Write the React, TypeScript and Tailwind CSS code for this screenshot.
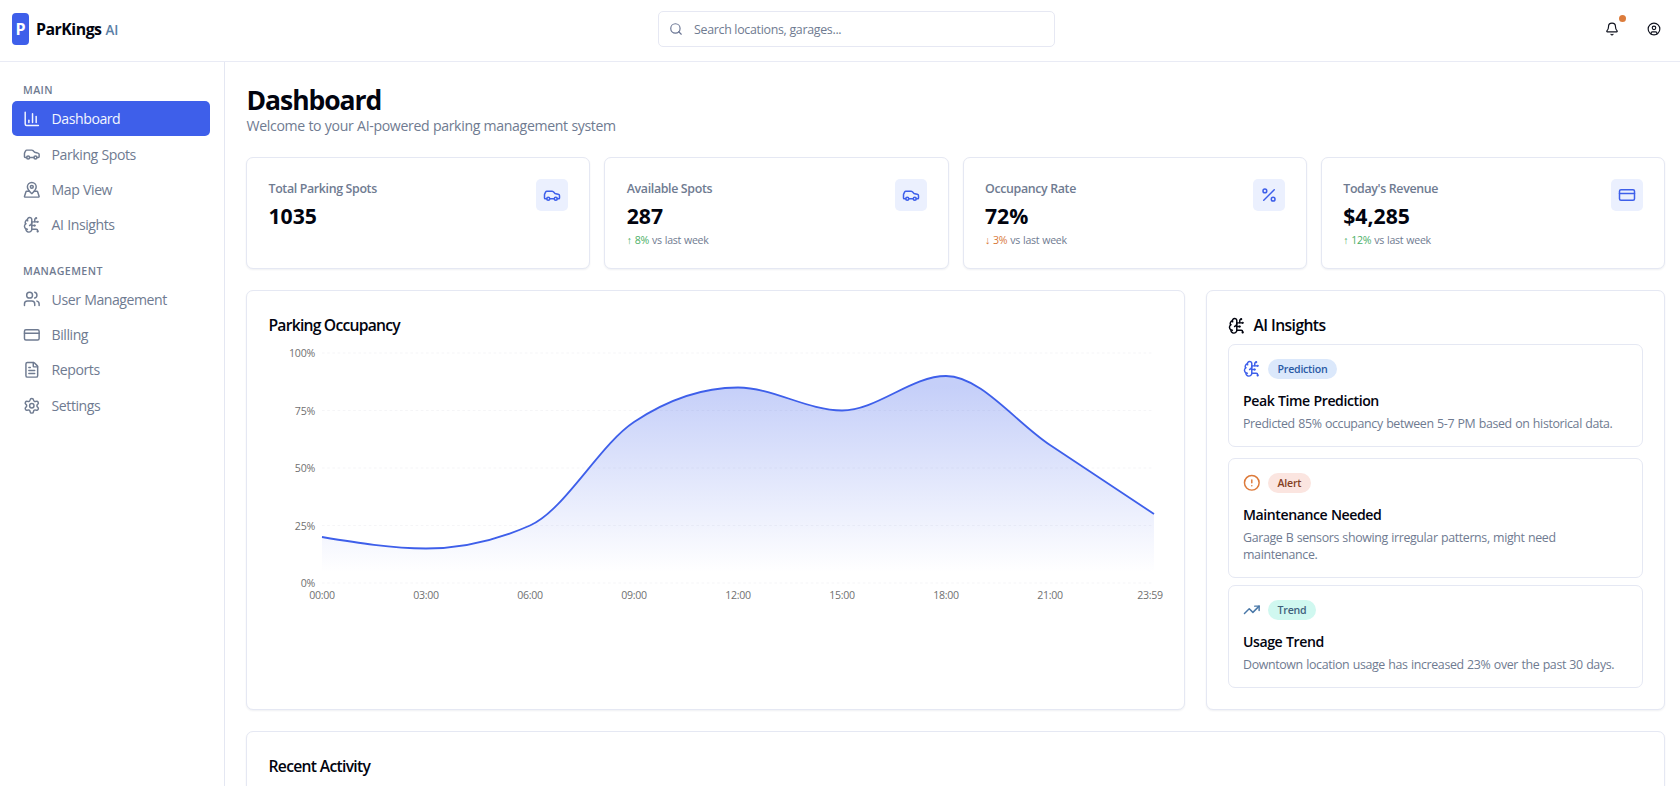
import type { ReactNode } from 'react'
import {
  Bell,
  BrainCircuit,
  Car,
  ChartColumn,
  CircleAlert,
  CircleUser,
  CreditCard,
  FileText,
  MapPinned,
  Percent,
  Search,
  Settings,
  TrendingUp,
  Users,
  type LucideIcon,
} from 'lucide-react'
import clsx from 'clsx'

type NavItem = { label: string; icon: LucideIcon; active?: boolean }

const mainNav: NavItem[] = [
  { label: 'Dashboard', icon: ChartColumn, active: true },
  { label: 'Parking Spots', icon: Car },
  { label: 'Map View', icon: MapPinned },
  { label: 'AI Insights', icon: BrainCircuit },
]

const managementNav: NavItem[] = [
  { label: 'User Management', icon: Users },
  { label: 'Billing', icon: CreditCard },
  { label: 'Reports', icon: FileText },
  { label: 'Settings', icon: Settings },
]

type Stat = { title: string; value: string; icon: LucideIcon; trend?: { up: boolean; value: string } }

const stats: Stat[] = [
  { title: 'Total Parking Spots', value: '1035', icon: Car },
  { title: 'Available Spots', value: '287', icon: Car, trend: { up: true, value: '8%' } },
  { title: 'Occupancy Rate', value: '72%', icon: Percent, trend: { up: false, value: '3%' } },
  { title: "Today's Revenue", value: '$4,285', icon: CreditCard, trend: { up: true, value: '12%' } },
]

const insights = [
  {
    type: 'Prediction',
    icon: BrainCircuit,
    iconClass: 'text-[#3e5fea]',
    badgeClass: 'bg-[#dbe8fb] text-[#2a5aa5]',
    title: 'Peak Time Prediction',
    description: 'Predicted 85% occupancy between 5-7 PM based on historical data.',
    cardClass: 'h-[103px]',
  },
  {
    type: 'Alert',
    icon: CircleAlert,
    iconClass: 'text-[#dd7a3a]',
    badgeClass: 'bg-[#fbe5e0] text-[#84401f]',
    title: 'Maintenance Needed',
    description: 'Garage B sensors showing irregular patterns, might need maintenance.',
    cardClass: 'mt-[11px] h-[120px]',
  },
  {
    type: 'Trend',
    icon: TrendingUp,
    iconClass: 'text-[#4a78a8]',
    badgeClass: 'bg-[#d0f8f0] text-[#40607c]',
    title: 'Usage Trend',
    description: 'Downtown location usage has increased 23% over the past 30 days.',
    cardClass: 'mt-[7px] h-[103px]',
  },
]

const occupancy = [
  { time: '00:00', value: 20 },
  { time: '03:00', value: 15 },
  { time: '06:00', value: 25 },
  { time: '09:00', value: 70 },
  { time: '12:00', value: 85 },
  { time: '15:00', value: 75 },
  { time: '18:00', value: 90 },
  { time: '21:00', value: 60 },
  { time: '23:59', value: 30 },
]

function Card({ className, children }: { className?: string; children?: ReactNode }) {
  return (
    <div className={clsx('rounded-[7px] border border-[#e5e8f3] bg-white shadow-[0_1px_2px_rgba(30,41,90,0.07)]', className)}>
      {children}
    </div>
  )
}

function Header() {
  return (
    <header className="flex h-[62px] shrink-0 items-center border-b border-[#e9ebf5] px-3 pb-[3px]">
      <div className="flex w-[646px] items-center">
        <div className="flex h-8 w-[17px] items-center justify-center rounded-[4px] bg-[#3e5fea] text-[16px] font-bold text-white">
          P
        </div>
        <span className="ml-[7px] pt-[2px] text-[15.9px] font-bold tracking-[-0.5px] text-[#02040f]">ParKings</span>
        <span className="ml-1 pt-[2px] text-[13.4px] font-semibold text-[#5a7fa6]">AI</span>
      </div>
      <div className="flex h-[36px] w-[397px] items-center rounded-[5px] border border-[#e6e8f3] pl-[10px]">
        <Search className="size-[14px] text-[#6b7694]" />
        <span className="ml-[11px] pt-[2px] text-[12.4px] tracking-[-0.3px] text-[#6f7b91]">Search locations, garages...</span>
      </div>
      <div className="ml-auto flex items-center gap-[28px] pr-[7px] text-[#10131f]">
        <div className="relative">
          <Bell className="size-[14px]" />
          <span className="absolute -top-[7px] left-[14px] size-[7px] rounded-full bg-[#dc7c3c]" />
        </div>
        <CircleUser className="size-[14px]" />
      </div>
    </header>
  )
}

function NavSection({ title, items }: { title: string; items: NavItem[] }) {
  return (
    <div>
      <h3 className="mb-[3px] pl-[11px] text-[10.6px] leading-[15px] font-semibold tracking-[0.42px] text-[#6f7b91]">{title}</h3>
      {items.map(({ label, icon: Icon, active }) => (
        <a
          key={label}
          className={clsx(
            'flex h-[35.4px] items-center rounded-[5px] pl-[11px] text-[14.1px] tracking-[-0.45px] [word-spacing:0.5px]',
            active ? 'bg-[#3e5fea] text-[#f3f6ff]' : 'text-[#6f7b91]',
          )}
        >
          <Icon className="mr-[11px] size-[17.6px]" />
          {label}
        </a>
      ))}
    </div>
  )
}

function Sidebar() {
  return (
    <aside className="flex w-[225px] shrink-0 flex-col gap-[21px] border-r border-[#e4e7f2] pt-[21px] pr-[14px] pl-3">
      <NavSection title="MAIN" items={mainNav} />
      <NavSection title="MANAGEMENT" items={managementNav} />
    </aside>
  )
}

function StatCard({ title, value, icon: Icon, trend }: Stat) {
  return (
    <Card className="flex h-[112px] items-start justify-between py-[21px] pr-[21px] pl-[21.5px]">
      <div>
        <p className="mt-px text-[12.4px] leading-[18px] font-semibold tracking-[-0.35px] text-[#6f7b91]">{title}</p>
        <p className="mt-[4px] text-[21.2px] leading-[28px] font-bold text-[#02040f]">{value}</p>
        {trend && (
          <p className="mt-[3px] text-[10.6px] leading-[14px] tracking-[-0.28px] text-[#6f7b91] [word-spacing:0.5px]">
            <span className={trend.up ? 'text-[#4cb068]' : 'text-[#d9793a]'}>
              {trend.up ? '↑' : '↓'} {trend.value}
            </span>{' '}
            vs last week
          </p>
        )}
      </div>
      <div className="rounded-[5px] bg-[#ebf0fe] p-[7px] text-[#3e5fea]">
        <Icon className="size-[18px]" />
      </div>
    </Card>
  )
}

// Plot area inside the svg
const plot = { left: 53, right: 885, top: 9, bottom: 239 }

// Monotone cubic interpolation through the points
function monotonePath(points: { x: number; y: number }[]) {
  const n = points.length
  const slopes = points.slice(1).map((p, i) => (p.y - points[i].y) / (p.x - points[i].x))
  const tangents: number[] = new Array(n).fill(0)
  for (let i = 1; i < n - 1; i++) {
    const a = slopes[i - 1]
    const b = slopes[i]
    tangents[i] = a * b <= 0 ? 0 : Math.sign(a) * Math.min(Math.abs(a), Math.abs(b), Math.abs((a + b) / 4)) * 2
  }
  tangents[0] = (3 * slopes[0] - tangents[1]) / 2
  tangents[n - 1] = (3 * slopes[n - 2] - tangents[n - 2]) / 2

  let d = `M${points[0].x},${points[0].y}`
  for (let i = 0; i < n - 1; i++) {
    const p = points[i]
    const q = points[i + 1]
    const dx = (q.x - p.x) / 3
    d += `C${p.x + dx},${p.y + dx * tangents[i]},${q.x - dx},${q.y - dx * tangents[i + 1]},${q.x},${q.y}`
  }
  return d
}

function OccupancyChart() {
  const yFor = (value: number) => plot.bottom - ((plot.bottom - plot.top) * value) / 100
  const step = (plot.right - plot.left) / (occupancy.length - 1)
  const points = occupancy.map((d, i) => ({ x: plot.left + i * step, y: yFor(d.value) }))
  const line = monotonePath(points)

  return (
    <svg width="896" height="264" className="block overflow-visible" fontSize="10.6">
      <defs>
        <linearGradient id="occupancy" x1="0" y1="0" x2="0" y2="1">
          <stop offset="5%" stopColor="#3e5fea" stopOpacity="0.3" />
          <stop offset="95%" stopColor="#3e5fea" stopOpacity="0" />
        </linearGradient>
      </defs>
      {[0, 25, 50, 75, 100].map((tick) => (
        <g key={tick}>
          <line x1={plot.left} x2={plot.right} y1={yFor(tick)} y2={yFor(tick)} stroke="#f5f5f7" strokeDasharray="2.6 2.6" />
          <text x={plot.left - 7} y={yFor(tick) + 4} textAnchor="end" fill="#707070" letterSpacing="-0.25">
            {tick}%
          </text>
        </g>
      ))}
      <path d={`${line}L${plot.right},${plot.bottom}L${plot.left},${plot.bottom}Z`} fill="url(#occupancy)" />
      <path d={line} fill="none" stroke="#3e5fea" strokeWidth="1.8" />
      {occupancy.map((d, i) => (
        <text
          key={d.time}
          x={i === occupancy.length - 1 ? points[i].x - 4 : points[i].x}
          y={plot.bottom + 15.5}
          textAnchor="middle"
          fill="#707070"
          letterSpacing="-0.3"
        >
          {d.time}
        </text>
      ))}
    </svg>
  )
}

function InsightsPanel() {
  return (
    <Card className="w-[459px] px-[21px] pt-[21px]">
      <h2 className="flex h-[32px] items-center pb-[4px] text-[15.7px] font-semibold tracking-[-0.6px] text-[#02040f]">
        <BrainCircuit className="mr-2 size-[17.6px]" />
        AI Insights
      </h2>
      {insights.map(({ type, icon: Icon, iconClass, badgeClass, title, description, cardClass }) => (
        <div key={type} className={clsx('rounded-[7px] border border-[#e5e8f3] px-[14px] pt-[14px]', cardClass)}>
          <div className="flex items-center gap-[7px]">
            <Icon className={clsx('size-[17.6px]', iconClass)} />
            <span
              className={clsx(
                'flex h-5 items-center rounded-full px-[10px] pt-px text-[10.6px] font-semibold tracking-[-0.25px]',
                badgeClass,
              )}
            >
              {type}
            </span>
          </div>
          <h3 className="mt-[11.5px] text-[14.1px] leading-5 font-semibold tracking-[-0.43px] text-[#02040f] [word-spacing:0.5px]">{title}</h3>
          <p className="mt-[4px] text-[12.4px] leading-[17.6px] tracking-[-0.36px] text-[#6f7b91] [word-spacing:0.5px]">{description}</p>
        </div>
      ))}
    </Card>
  )
}

export default function App() {
  return (
    <div className="flex h-screen flex-col overflow-hidden bg-white font-['Open_Sans','Noto_Sans',sans-serif]">
      <Header />
      <div className="flex min-h-0 flex-1">
        <Sidebar />
        <main className="min-w-0 flex-1 overflow-hidden pt-[22px] pr-[15px] pl-[21px]">
          <h1 className="pl-[0.5px] text-[26.5px] leading-[32px] font-bold tracking-[-1.05px] text-[#02040f]">Dashboard</h1>
          <p className="pl-[0.5px] text-[14.1px] leading-[20px] tracking-[-0.34px] text-[#6f7b91] [word-spacing:0.3px]">
            Welcome to your AI-powered parking management system
          </p>

          <div className="mt-[21px] grid grid-cols-4 gap-[14px]">
            {stats.map((stat) => (
              <StatCard key={stat.title} {...stat} />
            ))}
          </div>

          <div className="mt-[21px] flex h-[420px] gap-[21px]">
            <Card className="min-w-0 flex-1 pt-[21px] pr-[21px] pl-[21.5px]">
              <h2 className="h-[32px] text-[15.7px] leading-[26px] font-semibold tracking-[-0.78px] text-[#02040f]">Parking Occupancy</h2>
              <OccupancyChart />
            </Card>
            <InsightsPanel />
          </div>

          <Card className="mt-[21px] h-[300px] pt-[21px] pr-[21px] pl-[21.5px]">
            <h2 className="text-[15.7px] leading-[27px] font-semibold tracking-[-0.7px] text-[#02040f]">Recent Activity</h2>
          </Card>
        </main>
      </div>
    </div>
  )
}
